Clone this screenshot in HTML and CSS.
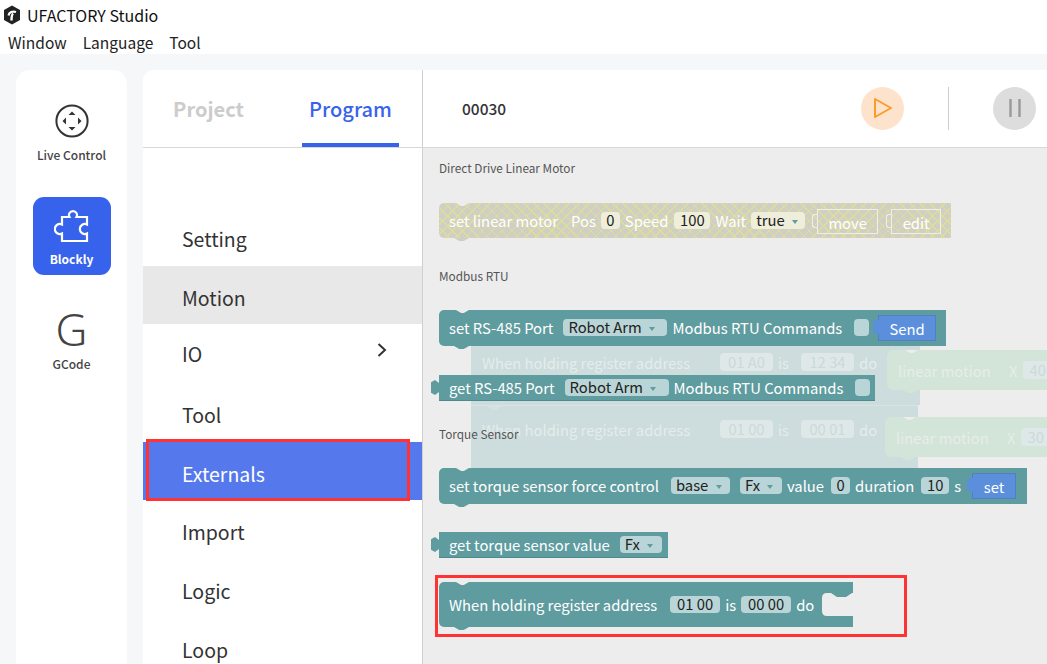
FILE: index.html
```html
<!DOCTYPE html>
<html lang="en">
<head>
  <meta charset="UTF-8">
  <title>UFACTORY Studio</title>
  <link rel="stylesheet" href="styles.css">
</head>
<body>
  <div class="titlebar">
    <svg class="logo" width="18" height="20" viewBox="0 0 18 20">
      <path d="M9 0.5 L17 5 V15 L9 19.5 L1 15 V5 Z" fill="#222"/>
      <path d="M5.500 10.500 C6 7 9.500 6 13 7" fill="none" stroke="#fff" stroke-width="2.2"/>
      <path d="M10 8.500 C8.500 10 8.500 12 8.500 15.500" fill="none" stroke="#fff" stroke-width="2.4"/>
    </svg>
    <span>UFACTORY Studio</span>
  </div>
  <div class="menubar">
    <span>Window</span>
    <span>Language</span>
    <span>Tool</span>
  </div>

  <div class="main">
    <div class="sidebar">
      <div class="nav-item nav-live">
        <svg width="34" height="34" viewBox="0 0 34 34">
          <circle cx="17" cy="17" r="15.6" fill="none" stroke="#333" stroke-width="2"/>
          <path d="M17 7.5 L20.5 11 H13.5 Z M17 26.5 L13.5 23 H20.5 Z M7.5 17 L11 13.5 V20.5 Z M26.5 17 L23 20.5 V13.5 Z" fill="#333"/>
        </svg>
        <span>Live Control</span>
      </div>
      <div class="nav-item nav-blockly">
        <svg width="36" height="36" viewBox="0 0 36 36">
          <path d="M8 9 H15.500 A4 4 0 1 1 22.500 9 H33 V16.500 A5 5 0 1 0 33 25.500 V33 H8 V25.500 A5 5 0 1 1 8 16.500 Z" fill="none" stroke="#fff" stroke-width="2.200"/>
        </svg>
        <span>Blockly</span>
      </div>
      <div class="nav-item nav-gcode">
        <span class="g-glyph">G</span>
        <span>GCode</span>
      </div>
    </div>

    <div class="panel">
      <div class="panel-head">
        <div class="tabs">
          <div class="tab">Project</div>
          <div class="tab tab-active">Program</div>
        </div>
        <div class="toolbar">
          <span class="prog-name">00030</span>
          <div class="round-btn btn-play">
            <svg width="20" height="22" viewBox="0 0 20 22">
              <path d="M2 2 L18 11 L2 20 Z" fill="none" stroke="#ff9a2e" stroke-width="2" stroke-linejoin="round"/>
            </svg>
          </div>
          <div class="tool-sep"></div>
          <div class="round-btn btn-pause">
            <svg width="12" height="18" viewBox="0 0 12 18">
              <path d="M1.500 0 V18 M10.500 0 V18" stroke="#999" stroke-width="2.400"/>
            </svg>
          </div>
        </div>
      </div>
      <div class="panel-body">
        <div class="cat-list">
          <div class="cat">Setting</div>
          <div class="cat cat-grey">Motion</div>
          <div class="cat cat-io">IO
            <svg width="10" height="14" viewBox="0 0 10 14"><path d="M1.500 1 L8 7 L1.500 13" fill="none" stroke="#333" stroke-width="2"/></svg>
          </div>
          <div class="cat">Tool</div>
          <div class="cat cat-blue">Externals</div>
          <div class="cat">Import</div>
          <div class="cat">Logic</div>
          <div class="cat">Loop</div>
          <div class="mark mark-cat"></div>
        </div>

        <div class="canvas">
          <div class="group-title title-linear">Direct Drive Linear Motor</div>
          <div class="group-title title-modbus">Modbus RTU</div>

          <div class="ghost ghost-a">
            <span class="g-text g-when">When holding register address</span>
            <span class="g-field gf-a">01 A0</span><span class="g-text">is</span><span class="g-field gf-b">12 34</span><span class="g-text">do</span>
          </div>
          <div class="ghost ghost-b">
            <span class="g-text g-when">When holding register address</span>
            <span class="g-field gf-a">01 00</span><span class="g-text">is</span><span class="g-field gf-b">00 01</span><span class="g-text">do</span>
          </div>
          <div class="ghost-green green-a"><span class="g-name">linear motion</span><span>X</span><span class="g-field">40</span></div>
          <div class="ghost-green green-b"><span class="g-name">linear motion</span><span>X</span><span class="g-field">30</span></div>

          <div class="group-title title-torque">Torque Sensor</div>

          <div class="block linear b-linear notched">
            <span class="w-first">set linear motor</span>
            <span>Pos</span><span class="field f-0">0</span><span>Speed</span><span class="field f-100">100</span><span>Wait</span>
            <span class="field f-true">true <i class="arrow"></i></span>
            <span class="stmt s-move">move</span>
            <span class="stmt s-edit">edit</span>
          </div>

          <div class="block b-send notched">
            <span>set RS-485 Port</span>
            <span class="field f-robot">Robot Arm <i class="arrow"></i></span>
            <span>Modbus RTU Commands</span>
            <span class="field f-empty"></span>
            <span class="btn-block btn-send">Send</span>
          </div>

          <div class="block b-get tabbed">
            <span>get RS-485 Port</span>
            <span class="field f-robot">Robot Arm <i class="arrow"></i></span>
            <span>Modbus RTU Commands</span>
            <span class="field f-empty"></span>
          </div>

          <div class="block b-force notched">
            <span>set torque sensor force control</span>
            <span class="field f-base">base <i class="arrow"></i></span>
            <span class="field f-fx">Fx <i class="arrow"></i></span>
            <span>value</span><span class="field f-0 f-val">0</span><span>duration</span><span class="field f-10">10</span><span>s</span>
            <span class="btn-block btn-set">set</span>
          </div>

          <div class="block b-value tabbed">
            <span>get torque sensor value</span>
            <span class="field f-fx f-fx2">Fx <i class="arrow"></i></span>
          </div>

          <div class="block b-when notched">
            <span>When holding register address</span>
            <span class="field f-reg f-reg1">01 00</span><span>is</span><span class="field f-reg">00 00</span><span>do</span>
            <svg class="mouth" width="31" height="24" viewBox="0 0 31 24">
              <path d="M31 0 H30 L24 4 H15 L9 0 H5 Q0 0 0 5 V18 Q0 23 5 23 H31 Z" fill="#ededed"/>
            </svg>
          </div>

          <div class="mark mark-when"></div>
        </div>
      </div>
    </div>
  </div>
</body>
</html>
```

FILE: styles.css
```css
* {
  box-sizing: border-box;
}

body {
  margin: 0;
  width: 1047px;
  height: 664px;
  overflow: hidden;
  background: #f6f7f9;
  font-family: "Noto Sans CJK SC", "Noto Sans", sans-serif;
  color: #333;
}

/* window chrome */
.titlebar {
  height: 29px;
  padding-left: 3px;
  display: flex;
  align-items: center;
  gap: 6px;
  background: #fff;
  font-size: 16px;
  color: #111;
}

.menubar {
  height: 25px;
  padding-left: 8px;
  display: flex;
  gap: 16px;
  background: #fff;
  font-size: 15.5px;
  line-height: 27px;
  color: #222;
}

.main {
  height: 610px;
  padding: 16px 0 0 16px;
  display: flex;
  gap: 16px;
}

/* left nav */
.sidebar {
  width: 111px;
  height: 610px;
  background: #fff;
  border-radius: 14px 14px 0 0;
  display: flex;
  flex-direction: column;
  align-items: center;
  padding-top: 34px;
}

.nav-item {
  display: flex;
  flex-direction: column;
  align-items: center;
  font-size: 12px;
  font-weight: 500;
  color: #444;
}

.nav-live svg {
  margin-bottom: 8px;
}

.nav-blockly {
  width: 78px;
  height: 78px;
  margin-top: 34px;
  padding-top: 11px;
  border-radius: 11px;
  background: #3763ec;
  color: #fff;
  font-weight: 700;
}

.nav-blockly span {
  margin-top: 6px;
}

.nav-gcode {
  margin-top: 33px;
}

.g-glyph {
  font-family: "Noto Sans", sans-serif;
  font-size: 44px;
  line-height: 42px;
  font-weight: 300;
  margin-bottom: 5px;
}

/* program panel */
.panel {
  flex: 1;
  height: 610px;
  background: #fff;
  border-radius: 10px 0 0 0;
}

.panel-head {
  height: 78px;
  display: flex;
  border-bottom: 1px solid #d8d8d8;
}

.tabs {
  width: 280px;
  display: flex;
  border-right: 1px solid #d0d0d0;
}

.tab {
  width: 97px;
  margin-left: 17px;
  height: 77px;
  line-height: 77px;
  text-align: center;
  font-size: 20px;
  font-weight: 700;
  color: #ccc;
}

.tab-active {
  margin-left: 45px;
  color: #3763ec;
  font-weight: 500;
  border-bottom: 4px solid #3763ec;
}

.toolbar {
  flex: 1;
  display: flex;
  align-items: center;
  padding: 0 0 1px 39px;
}

.prog-name {
  width: 399px;
  font-size: 15.5px;
  font-weight: 500;
}

.round-btn {
  width: 43px;
  height: 43px;
  border-radius: 50%;
  display: flex;
  align-items: center;
  justify-content: center;
}

.btn-play {
  background: #fde3cc;
}

.btn-pause {
  background: #ddd;
}

.tool-sep {
  width: 1px;
  height: 43px;
  margin: 0 44px;
  background: #ccc;
}

.panel-body {
  height: 532px;
  display: flex;
}

.cat-list {
  position: relative;
  width: 280px;
  padding-top: 59px;
  border-right: 1px solid #d0d0d0;
}

.cat {
  height: 58.7px;
  line-height: 63px;
  padding-left: 39px;
  font-size: 19.5px;
  color: #333;
}

.cat-grey {
  background: #e8e8e8;
}

.cat-blue {
  background: #5578ec;
  color: #fff;
}

.cat-io {
  display: flex;
  align-items: center;
  justify-content: space-between;
  padding-right: 35px;
}

.cat-io svg {
  margin-top: -7px;
}

/* red annotations drawn over the shot */
.mark {
  position: absolute;
  border: 3px solid #f33;
}

.mark-cat {
  left: 3px;
  top: 291px;
  width: 264px;
  height: 62px;
}

.mark-when {
  left: 12px;
  top: 427px;
  width: 472px;
  height: 62px;
}

/* blockly canvas */
.canvas {
  position: relative;
  flex: 1;
  overflow: hidden;
  background: #ededed;
  font-size: 14.8px;
}

.group-title {
  position: absolute;
  left: 16px;
  font-size: 11.8px;
  color: #555;
}

.title-linear { top: 11px; }
.title-modbus { top: 119px; }
.title-torque { top: 277px; }

.block {
  position: absolute;
  display: flex;
  align-items: center;
  gap: 5px;
  left: 16px;
  padding: 0 0 1px 10px;
  background: #5f9c9f;
  color: #fff;
  white-space: nowrap;
  border-radius: 5px 0 0 5px;
}

.notched::before {
  content: "";
  position: absolute;
  left: 17px;
  top: 0;
  width: 13px;
  height: 3px;
  background: #ededed;
  clip-path: polygon(0 0, 100% 0, 60% 100%, 40% 100%);
}

.notched::after {
  content: "";
  position: absolute;
  left: 15px;
  bottom: -3px;
  width: 15px;
  height: 3px;
  background: #5f9c9f;
  clip-path: polygon(0 0, 100% 0, 65% 100%, 35% 100%);
}

.tabbed {
  border-radius: 0;
}

.tabbed::before {
  content: "";
  position: absolute;
  left: -8px;
  top: 5px;
  width: 8px;
  height: 15px;
  background: #5f9c9f;
  clip-path: polygon(0 15%, 50% 0, 100% 20%, 100% 80%, 50% 100%, 0 85%);
}

.b-linear {
  top: 55px;
  width: 512px;
  height: 35px;
  background-color: #cfcfc4;
  background-image:
    repeating-linear-gradient(45deg, #dede9c 0 1px, transparent 1px 7px),
    repeating-linear-gradient(-45deg, #dede9c 0 1px, transparent 1px 7px);
}

.b-linear.notched::after {
  background: #cfcfc4;
}

.b-send {
  top: 162px;
  width: 507px;
  height: 36px;
}

.b-get {
  top: 227px;
  width: 436px;
  height: 26px;
  border-bottom: 1px solid #4e8a8d;
}

.b-force {
  top: 320px;
  width: 588px;
  height: 36px;
}

.b-value {
  top: 384px;
  width: 229px;
  height: 26px;
  border-bottom: 1px solid #4e8a8d;
}

.b-when {
  top: 434px;
  width: 414px;
  height: 45px;
}

.w-first {
  width: 117px;
}

.field {
  height: 17px;
  line-height: 16px;
  padding: 0 5px;
  border-radius: 4px;
  background: #b9d5d7;
  color: #222;
}

.linear .field {
  background: #eeeedb;
}

.arrow {
  display: inline-block;
  margin: 0 1px 2px 4px;
  border-left: 3px solid transparent;
  border-right: 3px solid transparent;
  border-top: 4px solid #5f9c9f;
}

.f-0 {
  width: 19px;
  padding: 0;
  text-align: center;
}

.f-val {
  margin-left: 2px;
}

.f-100 {
  width: 36px;
  padding: 0;
  text-align: center;
  margin-left: 1px;
}

.f-10 {
  width: 28px;
  padding: 0;
  text-align: center;
  margin-left: 2px;
}

.f-true {
  width: 54px;
}

.f-robot {
  width: 104px;
  margin-left: 5px;
}

.f-empty {
  width: 15px;
  padding: 0;
  margin-left: 7px;
}

.f-base {
  width: 59px;
  margin-left: 7px;
}

.f-fx {
  width: 42px;
  margin-left: 5px;
}

.f-reg {
  width: 50px;
  padding: 0;
  text-align: center;
}

.f-reg1 {
  margin-left: 8px;
}

.stmt {
  position: relative;
  height: 25px;
  line-height: 25px;
  text-align: center;
  border: 1px solid #eee;
  margin-top: 2px;
}

.stmt::before {
  content: "";
  position: absolute;
  left: -6px;
  top: 4px;
  width: 5px;
  height: 12px;
  border: 1px solid #eee;
  border-right: 0;
  border-radius: 3px 0 0 3px;
}

.s-move {
  width: 61px;
  margin-left: 7px;
}

.s-edit {
  width: 50px;
  margin-left: 8px;
}

.btn-block {
  position: relative;
  height: 26px;
  line-height: 26px;
  text-align: center;
  margin-left: auto;
  background: #5b8fdc;
  border: 1px solid #4f7fc4;
  color: #fff;
}

.btn-block::before {
  content: "";
  position: absolute;
  left: -6px;
  top: 4px;
  width: 6px;
  height: 14px;
  background: #5b8fdc;
  border-radius: 3px 0 0 3px;
}

.btn-send {
  width: 58px;
  margin-right: 10px;
}

.btn-set {
  width: 44px;
  margin-right: 11px;
}

.mouth {
  position: absolute;
  right: 0;
  top: 11px;
}

/* faded blocks left over from a drag */
.ghost {
  position: absolute;
  left: 48px;
  display: flex;
  gap: 5px;
  background: #cddcdc;
  color: #e4eded;
  white-space: nowrap;
}

.ghost-a {
  top: 198px;
  width: 449px;
  height: 59px;
  padding: 7px 0 0 11px;
}

.ghost-b {
  top: 257px;
  width: 447px;
  height: 63px;
  padding: 14px 0 0 11px;
  border-top: 1px solid #d8e4e4;
}

.ghost-b::before {
  content: "";
  position: absolute;
  left: 16px;
  top: 0;
  width: 15px;
  height: 4px;
  background: #d4e2e2;
  clip-path: polygon(0 0, 100% 0, 65% 100%, 35% 100%);
}

.g-text {
  line-height: 20px;
}

.g-when {
  width: 209px;
}

.g-field {
  height: 18px;
  padding: 0 6px;
  border-radius: 4px;
  background: #dfe8e8;
  line-height: 17px;
  color: #cbd9d9;
  text-align: center;
}

.gf-a {
  width: 53px;
  padding: 0;
  margin-left: 24px;
}

.gf-b {
  width: 53px;
  padding: 0;
  margin-left: 7px;
}

.ghost-green {
  position: absolute;
  left: 464px;
  width: 180px;
  height: 40px;
  padding-left: 11px;
  display: flex;
  align-items: center;
  gap: 6px;
  border-radius: 6px 0 0 6px;
  background: #d3e4d9;
  color: #e6eee8;
  white-space: nowrap;
}

.g-name {
  width: 105px;
}

.ghost-green::before {
  content: "";
  position: absolute;
  left: 18px;
  top: 0;
  width: 13px;
  height: 3px;
  background: #ededed;
  clip-path: polygon(0 0, 100% 0, 60% 100%, 40% 100%);
}

.ghost-green::after {
  content: "";
  position: absolute;
  left: 16px;
  bottom: -3px;
  width: 15px;
  height: 3px;
  background: #d3e4d9;
  clip-path: polygon(0 0, 100% 0, 65% 100%, 35% 100%);
}

.green-a { top: 202px; }
.green-b { top: 269px; left: 462px; }
```
